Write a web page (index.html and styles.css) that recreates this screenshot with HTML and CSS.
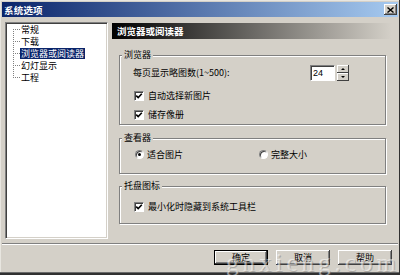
FILE: index.html
```html
<!DOCTYPE html>
<html lang="zh-CN">
<head>
<meta charset="utf-8">
<title>系统选项</title>
<link rel="stylesheet" href="styles.css">
</head>
<body>
<div class="window">
  <div class="titlebar">
    <span class="title">系统选项</span>
    <span class="close"><svg width="7" height="6" viewBox="0 0 7 6"><path d="M0.5 0.5 L6.5 5.5 M6.5 0.5 L0.5 5.5" stroke="#000" stroke-width="1.4" fill="none"/></svg></span>
  </div>
  <div class="main">
    <div class="tree">
      <div class="node first"><span class="stub"></span><span class="label">常规</span></div>
      <div class="node"><span class="stub"></span><span class="label">下载</span></div>
      <div class="node selected"><span class="stub"></span><span class="label">浏览器或阅读器</span></div>
      <div class="node"><span class="stub"></span><span class="label">幻灯显示</span></div>
      <div class="node last"><span class="stub"></span><span class="label">工程</span></div>
    </div>
    <div class="panel">
      <div class="header">浏览器或阅读器</div>
      <div class="groups">
        <fieldset class="group g1">
          <legend>浏览器</legend>
          <div class="row spinrow">
            <span>每页显示略图数(1~500):</span>
            <div class="spin">
              <span class="spin-input">24</span>
              <span class="spin-btns"><span class="spin-btn"><span class="tri up"></span></span><span class="spin-btn"><span class="tri down"></span></span></span>
            </div>
          </div>
          <div class="row check r2"><span class="checkbox"><svg width="8" height="8" viewBox="0 0 8 8"><path d="M1.2 3.6 L3.2 5.6 L6.8 1.8" stroke="#000" stroke-width="1.6" fill="none"/></svg></span><span>自动选择新图片</span></div>
          <div class="row check r3"><span class="checkbox"><svg width="8" height="8" viewBox="0 0 8 8"><path d="M1.2 3.6 L3.2 5.6 L6.8 1.8" stroke="#000" stroke-width="1.6" fill="none"/></svg></span><span>储存像册</span></div>
        </fieldset>
        <fieldset class="group g2">
          <legend>查看器</legend>
          <div class="row radios">
            <div class="radio-opt first"><span class="radio on"></span><span>适合图片</span></div>
            <div class="radio-opt"><span class="radio"></span><span>完整大小</span></div>
          </div>
        </fieldset>
        <fieldset class="group g3">
          <legend>托盘图标</legend>
          <div class="row check"><span class="checkbox"><svg width="8" height="8" viewBox="0 0 8 8"><path d="M1.2 3.6 L3.2 5.6 L6.8 1.8" stroke="#000" stroke-width="1.6" fill="none"/></svg></span><span>最小化时隐藏到系统工具栏</span></div>
        </fieldset>
      </div>
    </div>
  </div>
  <div class="separator"></div>
  <div class="buttons">
    <span class="btn default"><span class="btn-inner">确定</span></span>
    <span class="btn">取消</span>
    <span class="btn">帮助</span>
  </div>
  <div class="watermark">gnxieng.com</div>
</div>
</body>
</html>
```

FILE: styles.css
```css
html, body {
  margin: 0;
  padding: 0;
  background: #d4d0c8;
}
body {
  font-family: "Noto Sans CJK SC", "Noto Sans CJK JP", sans-serif;
  font-size: 9px;
  line-height: 12px;
  color: #000;
}
.window {
  position: relative;
  width: 400px;
  height: 275px;
  box-sizing: border-box;
  padding: 2px 2px 3px 2px;
  background: #d4d0c8;
  display: flex;
  flex-direction: column;
  overflow: hidden;
  box-shadow: inset -1px -2px #303030, inset 0 -3px #6a6a6a, inset 1px 1px #e8e6e0;
}
.titlebar {
  height: 15px;
  display: flex;
  align-items: center;
  justify-content: space-between;
  padding: 0 1px 0 2px;
  background: linear-gradient(to right, #0a246a, #a6caf0);
  color: #fff;
  font-weight: bold;
  font-size: 9.5px;
}
.title {
  letter-spacing: 0.2px;
}
.close {
  width: 13px;
  height: 11px;
  box-sizing: border-box;
  background: #d4d0c8;
  box-shadow: inset -1px -1px #404040, inset 1px 1px #fff, inset -2px -2px #808080;
  display: flex;
  align-items: center;
  justify-content: center;
}
.main {
  display: flex;
  margin: 5px 0 0 3px;
  height: 217px;
}
.tree {
  width: 103px;
  height: 217px;
  box-sizing: border-box;
  background: #fff;
  border: 1px solid;
  border-color: #808080 #fff #fff #808080;
  box-shadow: inset 1px 1px #404040, inset -1px -1px #d4d0c8;
  padding: 0 0 0 7px;
}
.node {
  display: flex;
  align-items: center;
  height: 12px;
}
.stub {
  width: 7px;
  height: 12px;
  flex: none;
  background:
    repeating-linear-gradient(to bottom, #808080 0 1px, transparent 1px 2px) left top / 1px 100% no-repeat,
    repeating-linear-gradient(to right, #808080 0 1px, transparent 1px 2px) left 6px / 100% 1px no-repeat;
}
.node.first .stub {
  background:
    repeating-linear-gradient(to bottom, #808080 0 1px, transparent 1px 2px) left 6px / 1px 6px no-repeat,
    repeating-linear-gradient(to right, #808080 0 1px, transparent 1px 2px) left 6px / 100% 1px no-repeat;
}
.node.last .stub {
  background:
    repeating-linear-gradient(to bottom, #808080 0 1px, transparent 1px 2px) left top / 1px 7px no-repeat,
    repeating-linear-gradient(to right, #808080 0 1px, transparent 1px 2px) left 6px / 100% 1px no-repeat;
}
.label {
  padding: 0 1px;
  line-height: 11px;
  white-space: nowrap;
}
.node.selected .label {
  background: #0a246a;
  color: #fff;
}
.panel {
  margin-left: 4px;
  width: 280px;
}
.header {
  margin-top: 1px;
  height: 16px;
  line-height: 16px;
  padding-left: 5px;
  background: linear-gradient(to right, #000, #d4d0c8);
  color: #fff;
  font-weight: bold;
  font-size: 9.5px;
}
.groups {
  margin-left: 7px;
  width: 267px;
}
.group {
  margin: 0;
  padding: 0 0 0 13px;
  border: 1px solid #808080;
  box-shadow: inset 1px 1px #fff, 1px 1px #fff;
  min-width: 0;
}
.group legend {
  margin-left: -11px;
  padding: 0 2px;
  line-height: 12px;
  background: #d4d0c8;
}
.g1 {
  margin-top: 10px;
  padding-top: 4px;
  padding-bottom: 3px;
}
.g2 {
  margin-top: 7px;
  padding-top: 4px;
  padding-bottom: 12px;
}
.g3 {
  margin-top: 6px;
  padding-top: 8px;
  padding-bottom: 10px;
}
.row {
  display: flex;
  align-items: center;
  white-space: nowrap;
}
.spinrow {
  height: 16px;
  padding-right: 36px;
}
.spin {
  margin-left: auto;
  display: flex;
  gap: 2px;
}
.spin-input {
  width: 25px;
  height: 16px;
  box-sizing: border-box;
  background: #fff;
  border: 1px solid;
  border-color: #808080 #fff #fff #808080;
  box-shadow: inset 1px 1px #404040;
  padding-left: 2px;
  line-height: 14px;
  font-family: "Liberation Sans", sans-serif;
  font-size: 9px;
}
.spin-btns {
  display: flex;
  flex-direction: column;
  width: 12px;
}
.spin-btn {
  height: 8px;
  background: #d4d0c8;
  box-shadow: inset -1px -1px #404040, inset 1px 1px #fff;
  display: flex;
  align-items: center;
  justify-content: center;
}
.tri {
  width: 0;
  height: 0;
  border-left: 2px solid transparent;
  border-right: 2px solid transparent;
}
.tri.up {
  border-bottom: 2px solid #000;
}
.tri.down {
  border-top: 2px solid #000;
}
.check {
  height: 13px;
  padding-left: 1px;
}
.r2 {
  margin-top: 8px;
}
.r3 {
  margin-top: 6px;
}
.checkbox {
  width: 10px;
  height: 10px;
  box-sizing: border-box;
  background: #fff;
  border: 1px solid;
  border-color: #808080 #fff #fff #808080;
  box-shadow: inset 1px 1px #404040;
  display: flex;
  align-items: center;
  justify-content: center;
  margin-right: 4px;
  flex: none;
}
.radios {
  height: 13px;
  padding-left: 2px;
}
.radio-opt {
  display: flex;
  align-items: center;
}
.radio-opt.first {
  width: 124px;
}
.radio {
  width: 9px;
  height: 9px;
  box-sizing: border-box;
  border-radius: 50%;
  background: #fff;
  border: 1px solid;
  border-color: #808080 #fff #fff #808080;
  box-shadow: inset 1px 1px #404040;
  margin-right: 3px;
  display: flex;
  align-items: center;
  justify-content: center;
  flex: none;
}
.radio.on::after {
  content: "";
  width: 3px;
  height: 3px;
  border-radius: 50%;
  background: #000;
}
.separator {
  margin: 4px 0 0 0;
  border-top: 1px solid #808080;
  border-bottom: 1px solid #fff;
  height: 0;
}
.buttons {
  display: flex;
  justify-content: flex-end;
  gap: 8px;
  margin-top: 5px;
  padding-right: 6px;
}
.btn {
  width: 54px;
  height: 15px;
  box-sizing: border-box;
  background: #d4d0c8;
  box-shadow: inset -1px -1px #404040, inset 1px 1px #fff, inset -2px -2px #808080;
  display: flex;
  align-items: center;
  justify-content: center;
  line-height: 12px;
}
.btn.default {
  border: 1px solid #000;
  box-shadow: none;
  padding: 0;
}
.btn-inner {
  flex: 1;
  align-self: stretch;
  display: flex;
  align-items: center;
  justify-content: center;
  box-shadow: inset -1px -1px #404040, inset 1px 1px #fff, inset -2px -2px #808080;
}
.watermark {
  position: absolute;
  left: 226px;
  top: 248px;
  font-family: "Liberation Serif", serif;
  font-size: 25px;
  line-height: 30px;
  letter-spacing: 4px;
  color: rgba(255, 255, 255, 0.5);
  text-shadow: 1px 1px 0 rgba(90, 90, 90, 0.35);
  pointer-events: none;
}
```
